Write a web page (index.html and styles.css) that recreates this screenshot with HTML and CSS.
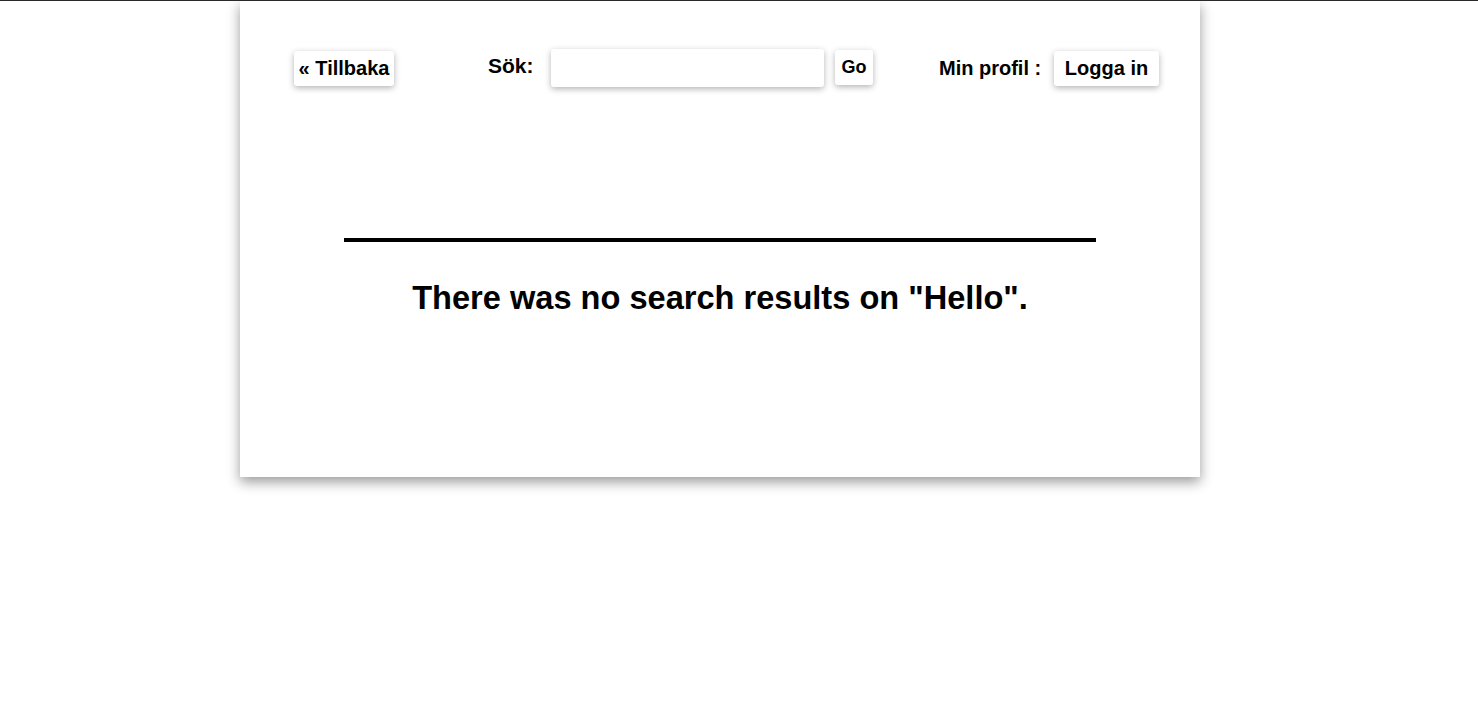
FILE: index.html
```html
<!DOCTYPE html>
<html lang="sv">
<head>
<meta charset="utf-8">
<title>Sök</title>
<link rel="stylesheet" href="styles.css">
</head>
<body>
<div class="page">
  <header class="topbar">
    <a class="btn btn-back" href="#">« Tillbaka</a>
    <form class="search">
      <label class="label search-label">Sök:</label>
      <input class="search-input" type="text">
      <button class="btn btn-go" type="button">Go</button>
    </form>
    <div class="profile">
      <span class="label profile-label">Min profil :</span>
      <a class="btn btn-login" href="#">Logga in</a>
    </div>
  </header>
  <main class="content">
    <hr class="divider">
    <h2 class="message">There was no search results on "Hello".</h2>
  </main>
</div>
</body>
</html>
```
FILE: styles.css
```css
html, body {
  margin: 0;
  padding: 0;
  background: #fff;
}
body {
  border-top: 1px solid #2a2a2a;
  font-family: "Liberation Sans", Arial, sans-serif;
  color: #000;
  min-height: 700px;
  box-sizing: border-box;
}
.page {
  width: 960px;
  margin-left: 240px;
  background: #fff;
  box-shadow: 0 5px 12px rgba(0, 0, 0, 0.4);
  height: 476px;
}
.topbar {
  display: flex;
  align-items: center;
  padding: 48px 0 0 54px;
}
.btn {
  display: inline-block;
  background: #fff;
  color: #000;
  text-decoration: none;
  font-family: "Liberation Sans", Arial, sans-serif;
  font-weight: bold;
  font-size: 20px;
  line-height: 35px;
  height: 35px;
  padding: 0;
  border: none;
  border-radius: 3px;
  box-shadow: 0 2px 6px rgba(0, 0, 0, 0.3);
  box-sizing: border-box;
  text-align: center;
}
.btn-back {
  width: 100px;
  margin-top: 1px;
}
.search {
  display: flex;
  align-items: center;
}
.label {
  font-weight: bold;
  font-size: 20px;
  line-height: 24px;
}
.search-label {
  width: 46px;
  margin-left: 94px;
  margin-top: -5px;
  font-size: 21px;
}
.search-input {
  width: 273px;
  height: 38px;
  box-sizing: border-box;
  border: none;
  border-radius: 3px;
  margin-left: 17px;
  box-shadow: 0 2px 6px rgba(0, 0, 0, 0.3);
  outline: none;
}
.btn-go {
  margin-left: 11px;
  width: 38px;
  font-size: 18px;
  margin-top: -1px;
}
.profile {
  display: flex;
  align-items: center;
  margin-left: 66px;
}
.profile-label {
  width: 104px;
  white-space: nowrap;
}
.btn-login {
  margin-left: 11px;
  width: 105px;
  margin-top: 1px;
}
.content {
  padding: 0 104px;
}
.divider {
  margin: 151px 0 0;
  border: none;
  height: 4px;
  background: #000;
}
.message {
  margin: 38px 0 0;
  text-align: center;
  font-size: 32.6px;
  line-height: 36px;
  font-weight: bold;
}
```
